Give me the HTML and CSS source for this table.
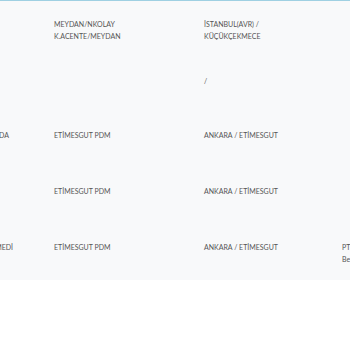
FILE: index.html
```html
<!DOCTYPE html>
<html lang="tr">
<head>
<meta charset="utf-8">
<title>Tablo</title>
<link rel="stylesheet" href="styles.css">
</head>
<body>
<div class="viewport">
  <table class="grid">
    <colgroup>
      <col class="c1"><col class="c2"><col class="c3"><col class="c4">
    </colgroup>
    <tbody>
      <tr class="r1">
        <td class="status"></td>
        <td>MEYDAN/NKOLAY<br>K.ACENTE/MEYDAN</td>
        <td>İSTANBUL(AVR) /<br>KÜÇÜKÇEKMECE</td>
        <td></td>
      </tr>
      <tr class="r2">
        <td class="status"></td>
        <td></td>
        <td>/</td>
        <td></td>
      </tr>
      <tr class="r3">
        <td class="status">DAĞITIMDA</td>
        <td>ETİMESGUT PDM</td>
        <td>ANKARA / ETİMESGUT</td>
        <td></td>
      </tr>
      <tr class="r3">
        <td class="status"></td>
        <td>ETİMESGUT PDM</td>
        <td>ANKARA / ETİMESGUT</td>
        <td></td>
      </tr>
      <tr class="r3">
        <td class="status wide">TESLİM EDİLMEDİ</td>
        <td>ETİMESGUT PDM</td>
        <td>ANKARA / ETİMESGUT</td>
        <td>PTT ŞUBESİ<br>Bekleniyor</td>
      </tr>
    </tbody>
  </table>
</div>
</body>
</html>
```
FILE: styles.css
```css
html, body {
  margin: 0;
  padding: 0;
  background: #ffffff;
}
.viewport {
  width: 350px;
  overflow: hidden;
}
.grid {
  margin-left: -120px;
  border-collapse: collapse;
  table-layout: fixed;
  width: 620px;
  background: #f8f9fa;
  border-top: 1px solid #9fd0e2;
  box-shadow: 0 2px 2px rgba(0, 0, 0, 0.03);
  font-family: Lato, "Open Sans", sans-serif;
  font-size: 7px;
  line-height: 12px;
  color: #555555;
}
.c1 { width: 156px; }
.c2 { width: 150px; }
.c3 { width: 138px; }
.c4 { width: 176px; }
.grid td {
  vertical-align: top;
  padding: 17px 8px 0 18px;
  white-space: nowrap;
  overflow: hidden;
}
.grid td.status {
  text-align: right;
  padding-right: 27px;
  overflow: visible;
}
.grid td.wide {
  padding-right: 23px;
}
.r1 { height: 57px; }
.r2 { height: 54px; }
.r3 { height: 56px; }
```
